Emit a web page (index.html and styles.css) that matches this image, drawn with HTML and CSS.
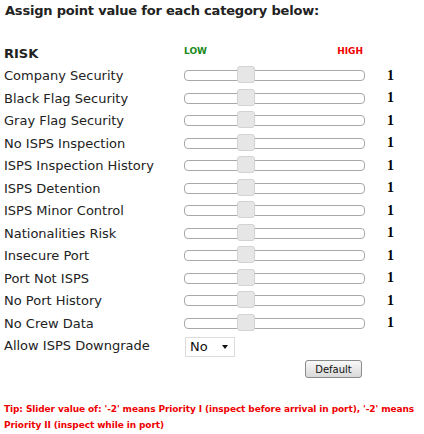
FILE: index.html
```html
<!DOCTYPE html>
<html>
<head>
<meta charset="utf-8">
<link rel="stylesheet" href="styles.css">
</head>
<body>
<div class="page">
  <h1 class="title">Assign point value for each category below:</h1>
  <div class="form">
    <div class="row head">
      <div class="label strong">RISK</div>
      <div class="scale"><span class="low">LOW</span><span class="high">HIGH</span></div>
      <div class="value"></div>
    </div>
    <div class="row"><div class="label">Company Security</div><div class="track"><span class="thumb"></span></div><div class="value">1</div></div>
    <div class="row"><div class="label">Black Flag Security</div><div class="track"><span class="thumb"></span></div><div class="value">1</div></div>
    <div class="row"><div class="label">Gray Flag Security</div><div class="track"><span class="thumb"></span></div><div class="value">1</div></div>
    <div class="row"><div class="label">No ISPS Inspection</div><div class="track"><span class="thumb"></span></div><div class="value">1</div></div>
    <div class="row"><div class="label">ISPS Inspection History</div><div class="track"><span class="thumb"></span></div><div class="value">1</div></div>
    <div class="row"><div class="label">ISPS Detention</div><div class="track"><span class="thumb"></span></div><div class="value">1</div></div>
    <div class="row"><div class="label">ISPS Minor Control</div><div class="track"><span class="thumb"></span></div><div class="value">1</div></div>
    <div class="row"><div class="label">Nationalities Risk</div><div class="track"><span class="thumb"></span></div><div class="value">1</div></div>
    <div class="row"><div class="label">Insecure Port</div><div class="track"><span class="thumb"></span></div><div class="value">1</div></div>
    <div class="row"><div class="label">Port Not ISPS</div><div class="track"><span class="thumb"></span></div><div class="value">1</div></div>
    <div class="row"><div class="label">No Port History</div><div class="track"><span class="thumb"></span></div><div class="value">1</div></div>
    <div class="row"><div class="label">No Crew Data</div><div class="track"><span class="thumb"></span></div><div class="value">1</div></div>
    <div class="row"><div class="label">Allow ISPS Downgrade</div><div class="selectwrap"><select class="select"><option>No</option><option>Yes</option></select></div><div class="value"></div></div>
    <div class="row btnrow"><div class="label"></div><div class="btncell"><button class="btn">Default</button></div><div class="value"></div></div>
  </div>
  <p class="tip">Tip: Slider value of: '-2' means Priority I (inspect before arrival in port), '-2' means Priority II (inspect while in port)</p>
</div>
</body>
</html>
```
FILE: styles.css
```css
html, body {
  margin: 0;
  padding: 0;
  background: #fff;
}
.page {
  padding: 0 4px;
  font-family: "DejaVu Sans", Verdana, sans-serif;
  color: #222;
}
.title {
  margin: 0;
  font-size: 13px;
  font-weight: bold;
  line-height: 21px;
  padding-left: 1px;
  letter-spacing: -0.2px;
}
.form {
  margin-top: 21px;
}
.row {
  display: flex;
  align-items: center;
  height: 22.5px;
}
.label {
  width: 180px;
  font-size: 13px;
  flex: none;
}
.strong {
  font-weight: bold;
}
.head .scale {
  width: 181px;
  display: flex;
  justify-content: space-between;
  font-size: 9px;
  font-weight: bold;
  margin-top: -5px;
}
.low { color: #1a8a1a; }
.high { color: #e00; margin-right: 2px; }
.track {
  position: relative;
  width: 181px;
  height: 11px;
  box-sizing: border-box;
  border: 1px solid #a8a8a8;
  border-radius: 4px;
  background: #fff;
  flex: none;
}
.thumb {
  position: absolute;
  left: 52px;
  top: -5px;
  width: 18px;
  height: 17px;
  box-sizing: border-box;
  background: #e6e6e6;
  border: 1px solid #d3d3d3;
  border-radius: 3px;
}
.value {
  padding-left: 22px;
  font-family: "Liberation Serif", "Times New Roman", serif;
  font-weight: 700;
  font-size: 14px;
  color: #000;
}
.selectwrap {
  position: relative;
  width: 181px;
}
.select {
  -webkit-appearance: none;
  appearance: none;
  width: 50px;
  height: 20px;
  box-sizing: border-box;
  border: 1px solid #dcdcdc;
  border-radius: 0;
  background: #fff;
  font-family: "DejaVu Sans", Verdana, sans-serif;
  font-size: 13px;
  color: #111;
  padding: 0 0 0 4px;
  margin: 2px 0 0 1px;
  display: block;
}
.selectwrap::after {
  content: "";
  position: absolute;
  left: 38px;
  top: 10px;
  border-left: 3.5px solid transparent;
  border-right: 3.5px solid transparent;
  border-top: 4px solid #111;
}
.btnrow {
  height: 24px;
}
.btncell {
  width: 181px;
  display: flex;
  justify-content: flex-end;
}
.btn {
  margin-right: 3px;
  width: 57px;
  height: 18px;
  box-sizing: border-box;
  padding: 0;
  border: 1px solid #8a8a8a;
  border-radius: 3px;
  background: linear-gradient(#f8f8f8, #d9d9d9);
  font-family: "DejaVu Sans", Verdana, sans-serif;
  font-size: 10px;
  color: #111;
}
.tip {
  margin: 20px 0 0;
  color: #e00;
  font-size: 9px;
  letter-spacing: -0.1px;
  font-weight: bold;
  line-height: 16px;
}
```
